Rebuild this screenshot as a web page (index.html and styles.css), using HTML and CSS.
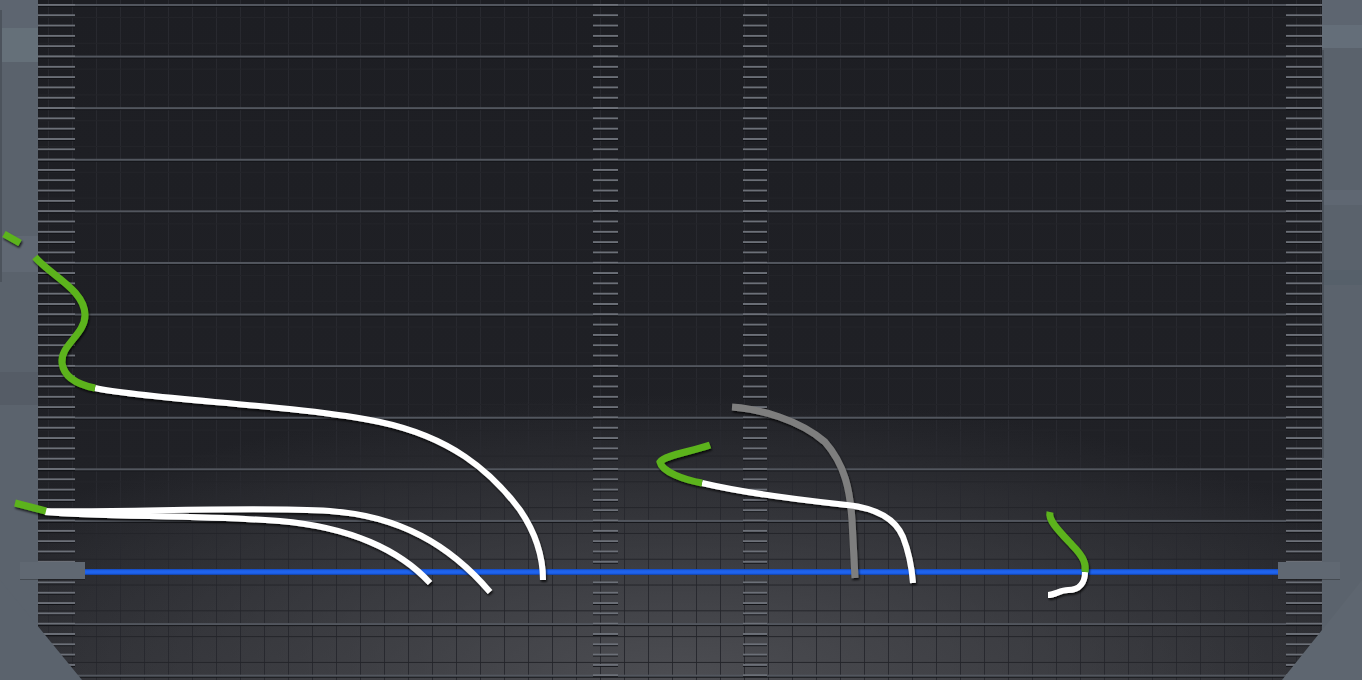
FILE: index.html
```html
<!DOCTYPE html>
<html>
<head>
<meta charset="utf-8">
<link rel="stylesheet" href="styles.css">
</head>
<body>
<div class="stage">
  <div class="pillar pillar-left"></div>
  <div class="field">
    <div class="ticks"></div>
    <div class="gap"></div>
    <div class="ticks"></div>
    <div class="gap"></div>
    <div class="ticks"></div>
    <div class="gap"></div>
    <div class="ticks"></div>
  </div>
  <div class="pillar pillar-right"></div>

  <div class="corner corner-left"></div>
  <div class="corner corner-right"></div>
  <div class="baseline"></div>
  <div class="stub stub-left"></div>
  <div class="stub stub-right"></div>

  <svg class="curves" width="1362" height="680" viewBox="0 0 1362 680">
    <defs>
      <filter id="sh" x="-20%" y="-20%" width="140%" height="140%">
        <feDropShadow dx="1" dy="2" stdDeviation="1.2" flood-color="#000" flood-opacity="0.75"/>
      </filter>
    </defs>
    <g filter="url(#sh)" fill="none" stroke-width="6">
      <path class="green" d="M4,234 L20,243"/>
      <path class="white" d="M95,388 C150,400 300,405 380,422 C450,437 490,470 520,510 C535,532 543,555 543,580"/>
      <path class="green" d="M35,257 C50,275 85,290 85,315 C85,335 60,345 62,363 C64,378 80,385 95,388"/>
      <path class="white" d="M45,511 C120,513 250,506 330,511 C400,516 450,545 490,592"/>
      <path class="white" d="M45,512 C100,517 200,515 280,521 C350,527 400,550 430,583"/>
      <path class="green" d="M15,503 L46,511"/>
      <path class="gray" d="M732,407 C760,409 800,420 825,442 C845,465 850,490 852,520 L855,578"/>
      <path class="white" d="M702,483 C740,492 800,500 847,505 C875,508 895,518 903,537 C910,555 912,570 913,583"/>
      <path class="green" d="M710,445 C690,452 665,455 660,462 C662,472 685,480 702,483"/>
      <path class="white" d="M1085,572 C1085,582 1080,590 1068,590 C1060,590 1055,595 1048,595"/>
      <path class="green" d="M1050,512 C1048,520 1058,530 1072,545 C1085,558 1086,565 1085,572"/>
    </g>
  </svg>
</div>
</body>
</html>
```

FILE: styles.css
```css
html, body {
  margin: 0;
  padding: 0;
  background: #1e1f24;
  font-family: "Liberation Sans", Arial, sans-serif;
}

.stage {
  position: relative;
  width: 1362px;
  height: 680px;
  overflow: hidden;
  display: flex;
}

.pillar {
  height: 100%;
  background-color: #59616b;
}

.pillar-left {
  width: 38px;
  background-image:
    linear-gradient(to right, #4c535c 0 2px, transparent 2px),
    linear-gradient(to bottom,
      #5d6570 0 28px, #657079 28px 62px, #5a626c 62px 236px,
      #606873 236px 272px, #5a626c 272px 372px, #555c66 372px 405px,
      #5b636d 405px 680px);
  background-size: 2px 40%, 100% 100%;
  background-repeat: no-repeat;
  background-position: 0 10px, 0 0;
}

.pillar-right {
  width: 40px;
  background-image:
    linear-gradient(to left, #4c535c 0 2px, transparent 2px),
    linear-gradient(to bottom,
      #5d6570 0 25px, #646e79 25px 48px, #5a626c 48px 190px,
      #5f6772 190px 205px, #5a626c 205px 270px, #56606a 270px 285px,
      #5b636d 285px 680px);
  background-size: 2px 60%, 100% 100%;
  background-repeat: no-repeat;
  background-position: 0 50px, 0 0;
}

.field {
  flex: 1;
  height: 100%;
  display: grid;
  grid-template-columns: 37px 518px 25px 125px 24px 519px 36px;
  background-color: #1e1f24;
  background-image:
    linear-gradient(to bottom, #52565e 0 2px, #131418 2px 3px, transparent 3px),
    linear-gradient(to bottom, #232429 0 1px, transparent 1px),
    linear-gradient(to right, #28292f 0 1px, transparent 1px),
    radial-gradient(ellipse 62% 42% at 50% 100%, rgba(78, 79, 84, 0.95), rgba(30, 31, 36, 0) 100%),
    linear-gradient(to bottom, #1d1e23 0%, #202126 70%, #2a2b30 100%);
  background-size: 100% 51.6px, 100% 25.8px, 24px 100%, 100% 100%, 100% 100%;
  background-position: 0 4px, 0 17px, 10px 0, 0 0, 0 0;
}

.ticks {
  height: 100%;
  background-image: linear-gradient(to bottom, #6c7078 0 2px, #101115 2px 3px, transparent 3px);
  background-size: 100% 10.32px;
  background-position: 0 4px;
}

.corner {
  position: absolute;
  bottom: 0;
  width: 82px;
  height: 100px;
  background: #5b636d;
}

.corner-left {
  left: 0;
  clip-path: polygon(0 0, 100% 100%, 0 100%);
}

.corner-right {
  right: 0;
  width: 80px;
  clip-path: polygon(100% 0, 100% 100%, 0 100%);
  background: #5e6670;
}

.baseline {
  position: absolute;
  left: 85px;
  top: 569px;
  width: 1193px;
  height: 6px;
  background: linear-gradient(to bottom, #1447b8 0, #1e63ee 30%, #1e63ee 70%, #123e9e 100%);
}

.stub {
  position: absolute;
  top: 562px;
  height: 17px;
  background: #606872;
  box-shadow: 0 1px 0 rgba(0, 0, 0, 0.25);
}

.stub-left {
  left: 20px;
  width: 65px;
}

.stub-right {
  left: 1278px;
  width: 62px;
}

.curves {
  position: absolute;
  left: 0;
  top: 0;
}

.green { stroke: #5cb31e; stroke-width: 7; }
.white { stroke: #ffffff; }
.gray  { stroke: #7e7e7e; stroke-width: 7; }
```
